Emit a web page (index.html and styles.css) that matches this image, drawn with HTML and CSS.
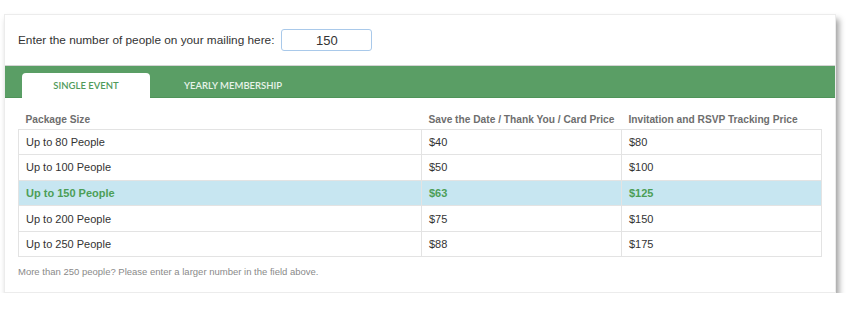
FILE: index.html
```html
<!DOCTYPE html>
<html lang="en">
<head>
  <meta charset="UTF-8">
  <title>Mailing Pricing</title>
  <link rel="stylesheet" href="styles.css">
</head>
<body>
  <div class="card">
    <div class="count-row">
      <label for="countInput">Enter the number of people on your mailing here:</label>
      <input type="text" id="countInput" value="150">
    </div>

    <div class="tabs">
      <div class="tab active">SINGLE EVENT</div>
      <div class="tab">YEARLY MEMBERSHIP</div>
    </div>

    <div class="pricing">
      <table class="price-table">
        <thead>
          <tr>
            <th class="col-size">Package Size</th>
            <th class="col-price">Save the Date / Thank You / Card Price</th>
            <th class="col-price">Invitation and RSVP Tracking Price</th>
          </tr>
        </thead>
        <tbody>
          <tr><td>Up to 80 People</td><td>$40</td><td>$80</td></tr>
          <tr><td>Up to 100 People</td><td>$50</td><td>$100</td></tr>
          <tr class="selected"><td>Up to 150 People</td><td>$63</td><td>$125</td></tr>
          <tr><td>Up to 200 People</td><td>$75</td><td>$150</td></tr>
          <tr><td>Up to 250 People</td><td>$88</td><td>$175</td></tr>
        </tbody>
      </table>
      <p class="note">More than 250 people? Please enter a larger number in the field above.</p>
    </div>
  </div>
</body>
</html>
```

FILE: styles.css
```css
* { box-sizing: border-box; }

body {
  margin: 0;
  padding: 14px 0 0 4px;
  font-family: 'Liberation Sans', Arial, sans-serif;
  background: #fff;
  color: #333;
}

.card {
  width: 832px;
  height: 279px;
  background: #fff;
  border: 1px solid #ececec;
  box-shadow: 3px 5px 6px rgba(0, 0, 0, 0.38);
}

.count-row {
  display: flex;
  align-items: center;
  gap: 7px;
  height: 51px;
  padding: 0 13px;
  border-bottom: 1px solid #d4d4d4;
}

.count-row label {
  font-size: 11.8px;
  color: #333;
}

.count-row input {
  width: 91px;
  height: 22px;
  border: 1px solid #a9c9ea;
  border-radius: 3px;
  font-family: 'Liberation Sans', Arial, sans-serif;
  font-size: 13px;
  color: #333;
  text-align: center;
  outline: none;
}

.tabs {
  display: flex;
  align-items: flex-end;
  height: 32px;
  padding-left: 17px;
  background: #5a9e65;
  border-bottom: 1px solid #4f9459;
}

.tab {
  width: 128px;
  height: 24px;
  line-height: 25px;
  text-align: center;
  font-family: Lato, 'Liberation Sans', sans-serif;
  font-size: 9.5px;
  font-weight: 600;
  color: #e8f3e9;
}

.tab + .tab {
  width: auto;
  margin-left: 34px;
}

.tab.active {
  background: #fff;
  color: #4f9a5b;
  border-radius: 4px 4px 0 0;
  height: 25px;
  margin-bottom: -1px;
}

.pricing {
  padding: 0 13px;
}

.price-table {
  width: 804px;
  table-layout: fixed;
  border-collapse: collapse;
  font-size: 11px;
}

.price-table th {
  text-align: left;
  font-weight: bold;
  font-size: 10.2px;
  white-space: nowrap;
  color: #6e6e6e;
  padding: 16px 7px 3px;
  height: 31px;
}

.col-size { width: 403px; }
.col-price { width: 200px; }

.price-table td {
  height: 25.6px;
  padding: 0 7px;
  border: 1px solid #e3e3e3;
  color: #333;
}

.price-table tr.selected td {
  background: #c7e6f1;
  color: #4c9e57;
  font-weight: bold;
}

.note {
  margin: 9px 0 0;
  font-size: 9.5px;
  color: #8a8a8a;
}
```
